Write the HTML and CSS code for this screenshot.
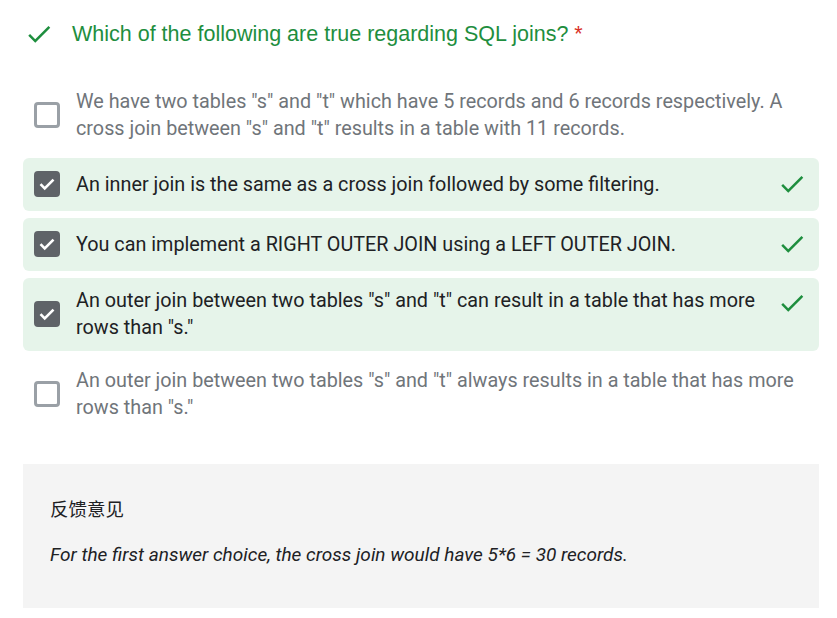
FILE: index.html
```html
<!DOCTYPE html>
<html>
<head>
<meta charset="utf-8">
<link rel="stylesheet" href="styles.css">
</head>
<body>
<div class="page">
  <div class="q-header">
    <svg class="q-check" viewBox="0 0 24 24" width="30" height="30"><path fill="#1e8e3e" d="M9 16.17L4.83 12l-1.42 1.41L9 19 21 7l-1.41-1.41z"/></svg>
    <div class="q-title">Which of the following are true regarding SQL joins?<span class="req"> *</span></div>
  </div>
  <div class="options">
    <div class="option">
      <div class="cb"></div>
      <div class="opt-text">We have two tables "s" and "t" which have 5 records and 6 records respectively. A cross join between "s" and "t" results in a table with 11 records.</div>
    </div>
    <div class="option correct">
      <div class="cb checked"><svg viewBox="0 0 20 20" width="20" height="20"><path d="M3.5 10.2l4.2 4.2L16.5 5.6" fill="none" stroke="#fff" stroke-width="2.6"/></svg></div>
      <div class="opt-text">An inner join is the same as a cross join followed by some filtering.</div>
      <svg class="ok" viewBox="0 0 24 24" width="30" height="30"><path fill="#1e8e3e" d="M9 16.17L4.83 12l-1.42 1.41L9 19 21 7l-1.41-1.41z"/></svg>
    </div>
    <div class="option correct">
      <div class="cb checked"><svg viewBox="0 0 20 20" width="20" height="20"><path d="M3.5 10.2l4.2 4.2L16.5 5.6" fill="none" stroke="#fff" stroke-width="2.6"/></svg></div>
      <div class="opt-text">You can implement a RIGHT OUTER JOIN using a LEFT OUTER JOIN.</div>
      <svg class="ok" viewBox="0 0 24 24" width="30" height="30"><path fill="#1e8e3e" d="M9 16.17L4.83 12l-1.42 1.41L9 19 21 7l-1.41-1.41z"/></svg>
    </div>
    <div class="option correct top-check">
      <div class="cb checked"><svg viewBox="0 0 20 20" width="20" height="20"><path d="M3.5 10.2l4.2 4.2L16.5 5.6" fill="none" stroke="#fff" stroke-width="2.6"/></svg></div>
      <div class="opt-text">An outer join between two tables "s" and "t" can result in a table that has more rows than "s."</div>
      <svg class="ok" viewBox="0 0 24 24" width="30" height="30"><path fill="#1e8e3e" d="M9 16.17L4.83 12l-1.42 1.41L9 19 21 7l-1.41-1.41z"/></svg>
    </div>
    <div class="option">
      <div class="cb"></div>
      <div class="opt-text">An outer join between two tables "s" and "t" always results in a table that has more rows than "s."</div>
    </div>
  </div>
  <div class="feedback">
    <div class="fb-title">反馈意见</div>
    <div class="fb-text">For the first answer choice, the cross join would have 5*6 = 30 records.</div>
  </div>
</div>
</body>
</html>
```

FILE: styles.css
```css
html, body {
  margin: 0;
  padding: 0;
  background: #fff;
}
.page {
  width: 796px;
  padding-left: 23px;
  font-family: Roboto, "Noto Sans", sans-serif;
}
.q-header {
  display: flex;
  align-items: center;
  height: 68px;
  padding-left: 1px;
}
.q-check {
  flex: none;
  margin-right: 18px;
}
.q-title {
  font-family: "Liberation Sans", Arial, sans-serif;
  font-size: 21.5px;
  color: #1e8e3e;
}
.req {
  color: #d93025;
}
.options {
  margin-top: 10px;
  display: flex;
  flex-direction: column;
  gap: 6.5px;
}
.option {
  display: flex;
  align-items: center;
  box-sizing: border-box;
  min-height: 53.5px;
  padding: 9.5px 15px 9.5px 11px;
  border-radius: 6px;
}
.option.correct {
  background: #e6f4ea;
}
.cb {
  flex: none;
  box-sizing: border-box;
  width: 26px;
  height: 26px;
  border: 3px solid #9aa0a6;
  border-radius: 4px;
  display: flex;
  align-items: center;
  justify-content: center;
}
.cb.checked {
  background: #5f6368;
  border-color: #5f6368;
}
.opt-text {
  flex: 1;
  margin-left: 16px;
  font-size: 19.8px;
  line-height: 27px;
  color: #70757a;
}
.correct .opt-text {
  color: #202124;
}
.ok {
  flex: none;
  margin-left: 14px;
  margin-right: -3px;
}
.top-check .ok {
  align-self: flex-start;
  margin-top: 1px;
}
.feedback {
  margin-top: 34px;
  background: #f4f4f4;
  padding: 34px 27px 41px;
}
.fb-title {
  font-family: Roboto, "Noto Sans CJK SC", sans-serif;
  font-size: 18.5px;
  line-height: 24px;
  color: #202124;
}
.fb-text {
  margin-top: 21px;
  font-size: 19px;
  line-height: 24px;
  font-style: italic;
  color: #202124;
}
```
